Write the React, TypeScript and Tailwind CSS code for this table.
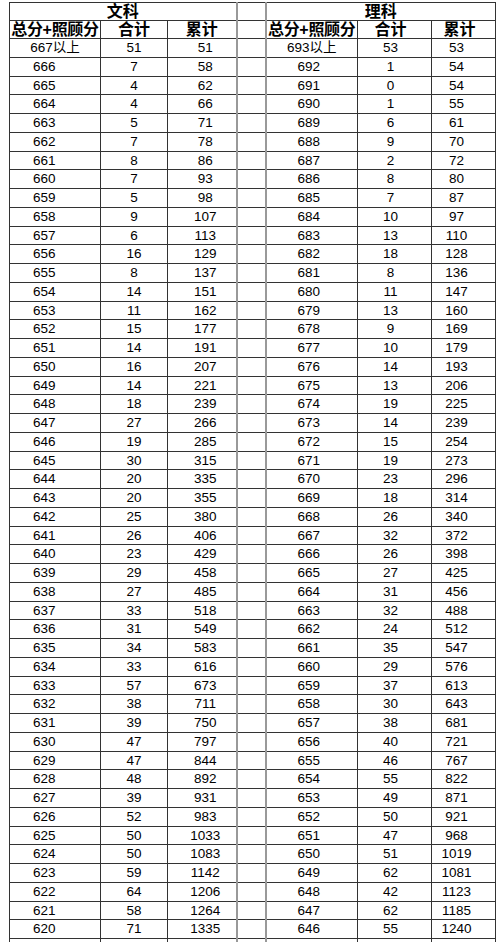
import React from 'react';

type Row = [string, number, number];

const wenke: Row[] = [
  ['667以上', 51, 51], ['666', 7, 58], ['665', 4, 62], ['664', 4, 66], ['663', 5, 71],
  ['662', 7, 78], ['661', 8, 86], ['660', 7, 93], ['659', 5, 98], ['658', 9, 107],
  ['657', 6, 113], ['656', 16, 129], ['655', 8, 137], ['654', 14, 151], ['653', 11, 162],
  ['652', 15, 177], ['651', 14, 191], ['650', 16, 207], ['649', 14, 221], ['648', 18, 239],
  ['647', 27, 266], ['646', 19, 285], ['645', 30, 315], ['644', 20, 335], ['643', 20, 355],
  ['642', 25, 380], ['641', 26, 406], ['640', 23, 429], ['639', 29, 458], ['638', 27, 485],
  ['637', 33, 518], ['636', 31, 549], ['635', 34, 583], ['634', 33, 616], ['633', 57, 673],
  ['632', 38, 711], ['631', 39, 750], ['630', 47, 797], ['629', 47, 844], ['628', 48, 892],
  ['627', 39, 931], ['626', 52, 983], ['625', 50, 1033], ['624', 50, 1083], ['623', 59, 1142],
  ['622', 64, 1206], ['621', 58, 1264], ['620', 71, 1335],
];

const like: Row[] = [
  ['693以上', 53, 53], ['692', 1, 54], ['691', 0, 54], ['690', 1, 55], ['689', 6, 61],
  ['688', 9, 70], ['687', 2, 72], ['686', 8, 80], ['685', 7, 87], ['684', 10, 97],
  ['683', 13, 110], ['682', 18, 128], ['681', 8, 136], ['680', 11, 147], ['679', 13, 160],
  ['678', 9, 169], ['677', 10, 179], ['676', 14, 193], ['675', 13, 206], ['674', 19, 225],
  ['673', 14, 239], ['672', 15, 254], ['671', 19, 273], ['670', 23, 296], ['669', 18, 314],
  ['668', 26, 340], ['667', 32, 372], ['666', 26, 398], ['665', 27, 425], ['664', 31, 456],
  ['663', 32, 488], ['662', 24, 512], ['661', 35, 547], ['660', 29, 576], ['659', 37, 613],
  ['658', 30, 643], ['657', 38, 681], ['656', 40, 721], ['655', 46, 767], ['654', 55, 822],
  ['653', 49, 871], ['652', 50, 921], ['651', 47, 968], ['650', 51, 1019], ['649', 62, 1081],
  ['648', 42, 1123], ['647', 62, 1185], ['646', 55, 1240],
];

const cell = 'border border-[#333] p-0 leading-none';
const gap = 'border-x-2 border-y border-x-[#999] border-y-[#333] p-0';
const head = `${cell} font-bold text-[16px] text-center`;

export default function App() {
  return (
    <div
      className="h-[942px] w-[500px] overflow-hidden bg-white text-black"
      style={{ fontFamily: '"Liberation Sans", "Noto Sans CJK SC", sans-serif' }}
    >
      <table className="ml-[9px] mt-[2px] w-[486px] table-fixed border-collapse text-[13.5px]">
        <colgroup>
          <col className="w-[91px]" />
          <col className="w-[67px]" />
          <col className="w-[69px]" />
          <col className="w-[29px]" />
          <col className="w-[92px]" />
          <col className="w-[74px]" />
          <col className="w-[64px]" />
        </colgroup>
        <thead>
          <tr className="h-[18px]">
            <th colSpan={3} className={head}>文科</th>
            <th className={gap}></th>
            <th colSpan={3} className={head}>理科</th>
          </tr>
          <tr className="h-[18px]">
            <th className={`${head} whitespace-nowrap tracking-[-0.3px]`}>总分+照顾分</th>
            <th className={head}>合计</th>
            <th className={head}>累计</th>
            <th className={gap}></th>
            <th className={`${head} whitespace-nowrap tracking-[-0.3px]`}>总分+照顾分</th>
            <th className={`${head} pr-[8px]`}>合计</th>
            <th className={`${head} pr-[8px]`}>累计</th>
          </tr>
        </thead>
        <tbody>
          {wenke.map((w, i) => {
            const l = like[i];
            const first = i === 0;
            return (
              <tr key={w[0]} className="h-[18.75px]">
                <td className={`${cell} ${first ? 'text-center' : 'pl-[23px] text-left'}`}>{w[0]}</td>
                <td className={`${cell} text-center`}>{w[1]}</td>
                <td className={`${cell} pl-[7px] text-center`}>{w[2]}</td>
                <td className={gap}></td>
                <td className={`${cell} ${first ? 'text-center' : 'pl-[31px] text-left'}`}>{l[0]}</td>
                <td className={`${cell} pr-[8px] text-center`}>{l[1]}</td>
                <td className={`${cell} pr-[14px] text-center`}>{l[2]}</td>
              </tr>
            );
          })}
          <tr className="h-[18.75px]">
            <td className={cell}></td>
            <td className={cell}></td>
            <td className={cell}></td>
            <td className={gap}></td>
            <td className={cell}></td>
            <td className={cell}></td>
            <td className={cell}></td>
          </tr>
        </tbody>
      </table>
    </div>
  );
}
